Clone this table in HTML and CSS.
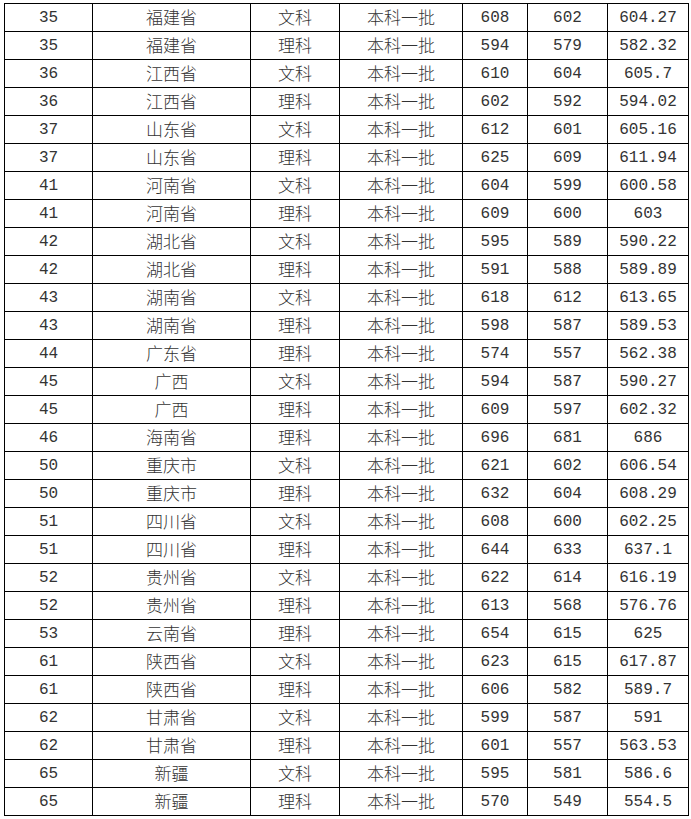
FILE: index.html
```html
<!DOCTYPE html>
<html lang="zh">
<head>
<meta charset="utf-8">
<link rel="stylesheet" href="styles.css">
</head>
<body>
<table class="scores">
<colgroup>
<col class="c1"><col class="c2"><col class="c3"><col class="c4"><col class="c5"><col class="c6"><col class="c7">
</colgroup>
<tbody>
<tr><td class="n">35</td><td class="z">福建省</td><td class="z">文科</td><td class="z">本科一批</td><td class="n">608</td><td class="n">602</td><td class="n">604.27</td></tr>
<tr><td class="n">35</td><td class="z">福建省</td><td class="z">理科</td><td class="z">本科一批</td><td class="n">594</td><td class="n">579</td><td class="n">582.32</td></tr>
<tr><td class="n">36</td><td class="z">江西省</td><td class="z">文科</td><td class="z">本科一批</td><td class="n">610</td><td class="n">604</td><td class="n">605.7</td></tr>
<tr><td class="n">36</td><td class="z">江西省</td><td class="z">理科</td><td class="z">本科一批</td><td class="n">602</td><td class="n">592</td><td class="n">594.02</td></tr>
<tr><td class="n">37</td><td class="z">山东省</td><td class="z">文科</td><td class="z">本科一批</td><td class="n">612</td><td class="n">601</td><td class="n">605.16</td></tr>
<tr><td class="n">37</td><td class="z">山东省</td><td class="z">理科</td><td class="z">本科一批</td><td class="n">625</td><td class="n">609</td><td class="n">611.94</td></tr>
<tr><td class="n">41</td><td class="z">河南省</td><td class="z">文科</td><td class="z">本科一批</td><td class="n">604</td><td class="n">599</td><td class="n">600.58</td></tr>
<tr><td class="n">41</td><td class="z">河南省</td><td class="z">理科</td><td class="z">本科一批</td><td class="n">609</td><td class="n">600</td><td class="n">603</td></tr>
<tr><td class="n">42</td><td class="z">湖北省</td><td class="z">文科</td><td class="z">本科一批</td><td class="n">595</td><td class="n">589</td><td class="n">590.22</td></tr>
<tr><td class="n">42</td><td class="z">湖北省</td><td class="z">理科</td><td class="z">本科一批</td><td class="n">591</td><td class="n">588</td><td class="n">589.89</td></tr>
<tr><td class="n">43</td><td class="z">湖南省</td><td class="z">文科</td><td class="z">本科一批</td><td class="n">618</td><td class="n">612</td><td class="n">613.65</td></tr>
<tr><td class="n">43</td><td class="z">湖南省</td><td class="z">理科</td><td class="z">本科一批</td><td class="n">598</td><td class="n">587</td><td class="n">589.53</td></tr>
<tr><td class="n">44</td><td class="z">广东省</td><td class="z">理科</td><td class="z">本科一批</td><td class="n">574</td><td class="n">557</td><td class="n">562.38</td></tr>
<tr><td class="n">45</td><td class="z">广西</td><td class="z">文科</td><td class="z">本科一批</td><td class="n">594</td><td class="n">587</td><td class="n">590.27</td></tr>
<tr><td class="n">45</td><td class="z">广西</td><td class="z">理科</td><td class="z">本科一批</td><td class="n">609</td><td class="n">597</td><td class="n">602.32</td></tr>
<tr><td class="n">46</td><td class="z">海南省</td><td class="z">理科</td><td class="z">本科一批</td><td class="n">696</td><td class="n">681</td><td class="n">686</td></tr>
<tr><td class="n">50</td><td class="z">重庆市</td><td class="z">文科</td><td class="z">本科一批</td><td class="n">621</td><td class="n">602</td><td class="n">606.54</td></tr>
<tr><td class="n">50</td><td class="z">重庆市</td><td class="z">理科</td><td class="z">本科一批</td><td class="n">632</td><td class="n">604</td><td class="n">608.29</td></tr>
<tr><td class="n">51</td><td class="z">四川省</td><td class="z">文科</td><td class="z">本科一批</td><td class="n">608</td><td class="n">600</td><td class="n">602.25</td></tr>
<tr><td class="n">51</td><td class="z">四川省</td><td class="z">理科</td><td class="z">本科一批</td><td class="n">644</td><td class="n">633</td><td class="n">637.1</td></tr>
<tr><td class="n">52</td><td class="z">贵州省</td><td class="z">文科</td><td class="z">本科一批</td><td class="n">622</td><td class="n">614</td><td class="n">616.19</td></tr>
<tr><td class="n">52</td><td class="z">贵州省</td><td class="z">理科</td><td class="z">本科一批</td><td class="n">613</td><td class="n">568</td><td class="n">576.76</td></tr>
<tr><td class="n">53</td><td class="z">云南省</td><td class="z">理科</td><td class="z">本科一批</td><td class="n">654</td><td class="n">615</td><td class="n">625</td></tr>
<tr><td class="n">61</td><td class="z">陕西省</td><td class="z">文科</td><td class="z">本科一批</td><td class="n">623</td><td class="n">615</td><td class="n">617.87</td></tr>
<tr><td class="n">61</td><td class="z">陕西省</td><td class="z">理科</td><td class="z">本科一批</td><td class="n">606</td><td class="n">582</td><td class="n">589.7</td></tr>
<tr><td class="n">62</td><td class="z">甘肃省</td><td class="z">文科</td><td class="z">本科一批</td><td class="n">599</td><td class="n">587</td><td class="n">591</td></tr>
<tr><td class="n">62</td><td class="z">甘肃省</td><td class="z">理科</td><td class="z">本科一批</td><td class="n">601</td><td class="n">557</td><td class="n">563.53</td></tr>
<tr><td class="n">65</td><td class="z">新疆</td><td class="z">文科</td><td class="z">本科一批</td><td class="n">595</td><td class="n">581</td><td class="n">586.6</td></tr>
<tr><td class="n">65</td><td class="z">新疆</td><td class="z">理科</td><td class="z">本科一批</td><td class="n">570</td><td class="n">549</td><td class="n">554.5</td></tr>
</tbody>
</table>
</body>
</html>
```
FILE: styles.css
```css
html, body {
  margin: 0;
  padding: 0;
  background: #ffffff;
}
body {
  padding: 3px 0 0 4px;
}
.scores {
  border-collapse: collapse;
  table-layout: fixed;
  width: 684px;
}
.c1 { width: 88px; }
.c2 { width: 158px; }
.c3 { width: 89px; }
.c4 { width: 123px; }
.c5 { width: 65px; }
.c6 { width: 80px; }
.c7 { width: 81px; }
.scores td {
  border: 1px solid #000;
  height: 27px;
  padding: 0;
  text-align: center;
  vertical-align: middle;
  color: #333333;
  box-sizing: border-box;
  white-space: nowrap;
  overflow: hidden;
}
.scores td.n {
  font-family: "Liberation Mono", "DejaVu Sans Mono", monospace;
  font-size: 16px;
  line-height: 25px;
  padding-top: 2px;
}
.scores td.z {
  font-family: "Noto Sans CJK SC", "Noto Sans", sans-serif;
  font-size: 17px;
  font-weight: 300;
  line-height: 25px;
  padding-bottom: 2px;
}
```
